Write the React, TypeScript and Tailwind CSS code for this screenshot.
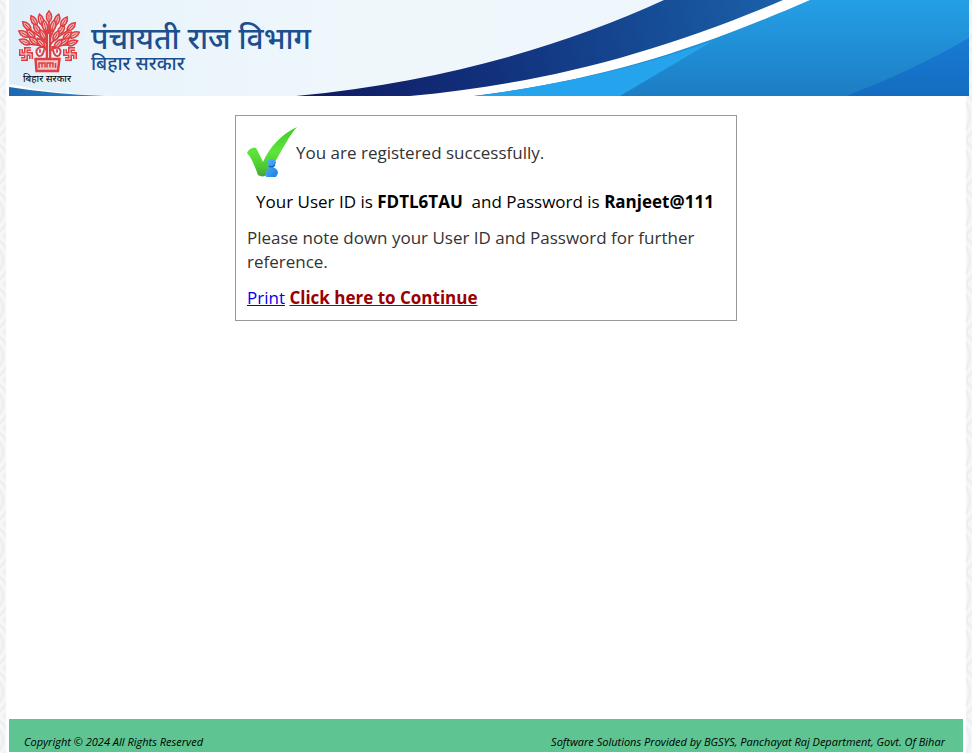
const leaves: [number, number, number][] = [
  // x, y, rotation
  [49, 17, 0], [41, 20, -15], [57, 20, 18], [34, 21, -30], [64, 22, 32],
  [45, 26, -12], [53, 26, 14], [27, 26, -45], [71, 27, 45],
  [37, 29, -32], [61, 30, 34], [24, 34, -60], [74, 35, 62],
  [31, 34, -45], [67, 36, 48], [43, 35, -28], [56, 36, 28],
  [25, 42, -68], [72, 43, 70], [34, 41, -52], [64, 42, 54],
  [41, 43, -40], [58, 44, 40],
];

function Swastika({ x }: { x: number }) {
  return (
    <g transform={`translate(${x} 54)`} fill="none">
      <path d="M-5-5V0H5V5M5-5H0V5H-5" stroke="#dd3f42" strokeWidth="4" />
      <path d="M-5-5V0H5V5M5-5H0V5H-5" stroke="#f7d9db" strokeWidth="1" />
    </g>
  );
}

function Emblem() {
  return (
    <svg viewBox="17 10 64 64" className="h-16 w-16" aria-hidden="true">
      <g stroke="#dd3f42" fill="none" strokeLinecap="round">
        <path strokeWidth="5.500" d="M48.500 58V32" />
        <path strokeWidth="1.800" d="M48 52C43 44 36 45 26 44M49 52C55 45 62 45 72 44M48 45C42 37 36 34 29 29M50 45C55 38 62 34 69 30M48 38L41 23M50 38L57 23M49 35V18" />
        <path strokeWidth="1.800" d="M45 47C38 46 35 50 37 54S43 56 44 50M40 50V52M52 47C59 46 62 50 60 54S54 56 53 50M57 50V52" />
      </g>
      {leaves.map(([x, y, r]) => (
        <g key={`${x}-${y}`} transform={`translate(${x} ${y}) rotate(${r})`}>
          <path d="M0-6C3.800-2 3 3 0 5.500C-3 3-3.800-2 0-6Z" fill="#f3c4c6" stroke="#dd3f42" strokeWidth="1.600" />
          <path d="M0-3V5" stroke="#dd3f42" strokeWidth="1" />
        </g>
      ))}
      <path d="M48.500 34V58" stroke="#f7d9db" strokeWidth="1" />
      <Swastika x={26} />
      <Swastika x={70} />
      <path d="M35.500 59H59.500L58 71H36.500Z" fill="#f3c4c6" stroke="#dd3f42" strokeWidth="2.400" />
      <path d="M39 68V63H42V67.500M42 63H45V67.500M47 67.500V63H50V67.500M50 63H53V67.500M55.500 63V68" fill="none" stroke="#dd3f42" strokeWidth="1.500" />
    </svg>
  );
}

function BannerArt() {
  return (
    <svg viewBox="9 0 960 96" preserveAspectRatio="none" className="absolute inset-0 h-full w-full" aria-hidden="true">
      <defs>
        <linearGradient id="sky" x1="0" x2="1" y1="0" y2="0">
          <stop offset="0" stopColor="#deeefa" />
          <stop offset="0.080" stopColor="#e8f3fb" />
          <stop offset="0.350" stopColor="#eff7fb" />
          <stop offset="1" stopColor="#eef6fb" />
        </linearGradient>
        <linearGradient id="navy" x1="300" x2="783" y1="96" y2="0" gradientUnits="userSpaceOnUse">
          <stop offset="0" stopColor="#101a63" />
          <stop offset="0.400" stopColor="#12317c" />
          <stop offset="1" stopColor="#1a61aa" />
        </linearGradient>
        <linearGradient id="azure" x1="0" x2="0" y1="0" y2="1">
          <stop offset="0" stopColor="#249fe6" />
          <stop offset="1" stopColor="#1d7dc4" />
        </linearGradient>
        <linearGradient id="royal" x1="0" x2="0" y1="0" y2="1">
          <stop offset="0" stopColor="#187bd4" />
          <stop offset="1" stopColor="#146cc0" />
        </linearGradient>
        <linearGradient id="corner" x1="0" x2="1" y1="0" y2="0">
          <stop offset="0" stopColor="#1c67b0" />
          <stop offset="1" stopColor="#2f86c8" />
        </linearGradient>
      </defs>
      <path fill="url(#sky)" d="M9 0H969V96H9Z" />
      <path fill="url(#navy)" d="M296 96C445 82 565 45 664 0H790L640 60L440 96Z" />
      <path fill="#fff" d="M410 96C545 83 655 54 783 0H812L640 70L480 97Z" />
      <path fill="url(#azure)" d="M474 96C600 80 690 52 810 0H969V96Z" />
      <path fill="#25a3ec" d="M474 96C567 84 640 66 713 41L620 96Z" />
      <path fill="url(#royal)" d="M846 96Q910 72 969 38V96Z" />
      <path fill="#fff" d="M9 84Q55 94 115 96H9Z" />
      <path fill="url(#corner)" d="M9 87Q52 94 105 96H9Z" />
    </svg>
  );
}

function SuccessIcon() {
  return (
    <svg viewBox="0 0 50 50" className="h-[50px] w-[50px] shrink-0" role="img" aria-label="Success">
      <defs>
        <linearGradient id="tick" x1="0" x2="0" y1="0" y2="1">
          <stop offset="0" stopColor="#3fca28" />
          <stop offset="0.500" stopColor="#5de53a" />
          <stop offset="0.800" stopColor="#4dcb30" />
          <stop offset="1" stopColor="#4aa03a" />
        </linearGradient>
        <linearGradient id="person" x1="0" x2="1" y1="0" y2="1">
          <stop offset="0" stopColor="#57b4fa" />
          <stop offset="1" stopColor="#1c7ce0" />
        </linearGradient>
      </defs>
      <path fill="url(#tick)" d="M0 26C1 23 5 20 9 21C12 26 14 31 16 35C23 20 33 8 50 0C42 9 35 23 28 35L21 47C18 50 14 50 11 48C8 40 5 31 0 26Z" />
      <path fill="url(#person)" d="M19 50V45Q20 41 23 40Q20 38 20 35Q21 32 25 32Q29 33 29 36Q28 39 26 40Q31 42 31 46L29 50Z" />
      <path d="M22 39Q25 41 28 38" fill="none" stroke="#1261b8" strokeWidth="1.200" />
    </svg>
  );
}

function Backdrop() {
  return (
    <svg className="absolute inset-0 h-full w-full" aria-hidden="true">
      <defs>
        <pattern id="scallops" width="96" height="48" patternUnits="userSpaceOnUse" x="-12" y="-4">
          <path fill="#f5f6f8" d="M0 0H96V48H0Z" />
          <g fill="none" stroke="#eeeff1" strokeWidth="3">
            {[0, 96].map((cx) =>
              [8, 15, 22, 29].map((r) => <circle key={`${cx}-${r}`} cx={cx} cy="24" r={r} />),
            )}
          </g>
        </pattern>
      </defs>
      <rect width="100%" height="100%" fill="url(#scallops)" />
    </svg>
  );
}

export default function App() {
  return (
    <div className="relative isolate flex min-h-screen justify-center overflow-hidden px-1.5 font-['Open_Sans','Noto_Sans',sans-serif]">
      <div className="absolute inset-0 -z-10">
        <Backdrop />
      </div>
      <div className="flex w-full flex-col bg-white px-[3px]">
        <header className="relative -mr-1.5 h-24">
          <BannerArt />
          <div className="relative flex h-full items-start gap-2.5 pl-2 font-['Noto_Sans_Devanagari','Noto_Sans',sans-serif]">
            <div className="flex w-16 flex-col items-center pt-2.5">
              <Emblem />
              <p className="whitespace-nowrap pr-1 text-[10px] leading-3 text-black">बिहार सरकार</p>
            </div>
            <div className="pt-7 text-[#1b4f8f]">
              <h1 className="text-[30px] leading-7 font-medium">पंचायती राज विभाग</h1>
              <p className="text-[19px] leading-5 font-medium">बिहार सरकार</p>
            </div>
          </div>
        </header>

        <main className="grow pt-[19px]">
          <section className="mx-auto w-full max-w-[502px] space-y-3 border border-[#999] px-[11px] pt-3 pb-2.5 text-[17px] leading-6 text-[#333]">
            <div className="-mt-px flex items-center">
              <SuccessIcon />
              <p className="-ml-px pt-0.5">You are registered successfully.</p>
            </div>
            <p className="pt-px pl-[9px] text-black">
              Your User ID is <b>FDTL6TAU</b>&nbsp; and Password is <b>Ranjeet@111</b>
            </p>
            <p>Please note down your User ID and Password for further reference.</p>
            <p>
              <a href="#print" className="text-[#0000ee] underline">Print</a>{" "}
              <a href="#continue" className="font-bold text-[#990000] underline">Click here to Continue</a>
            </p>
          </section>
        </main>

        <footer className="mb-px flex h-[33px] items-end justify-between bg-[#5dc492] pb-0.5 pl-[15px] pr-[18px] text-[11px] leading-4 text-black italic">
          <p>Copyright © 2024 All Rights Reserved</p>
          <p>Software Solutions Provided by BGSYS, Panchayat Raj Department, Govt. Of Bihar</p>
        </footer>
      </div>
    </div>
  );
}
